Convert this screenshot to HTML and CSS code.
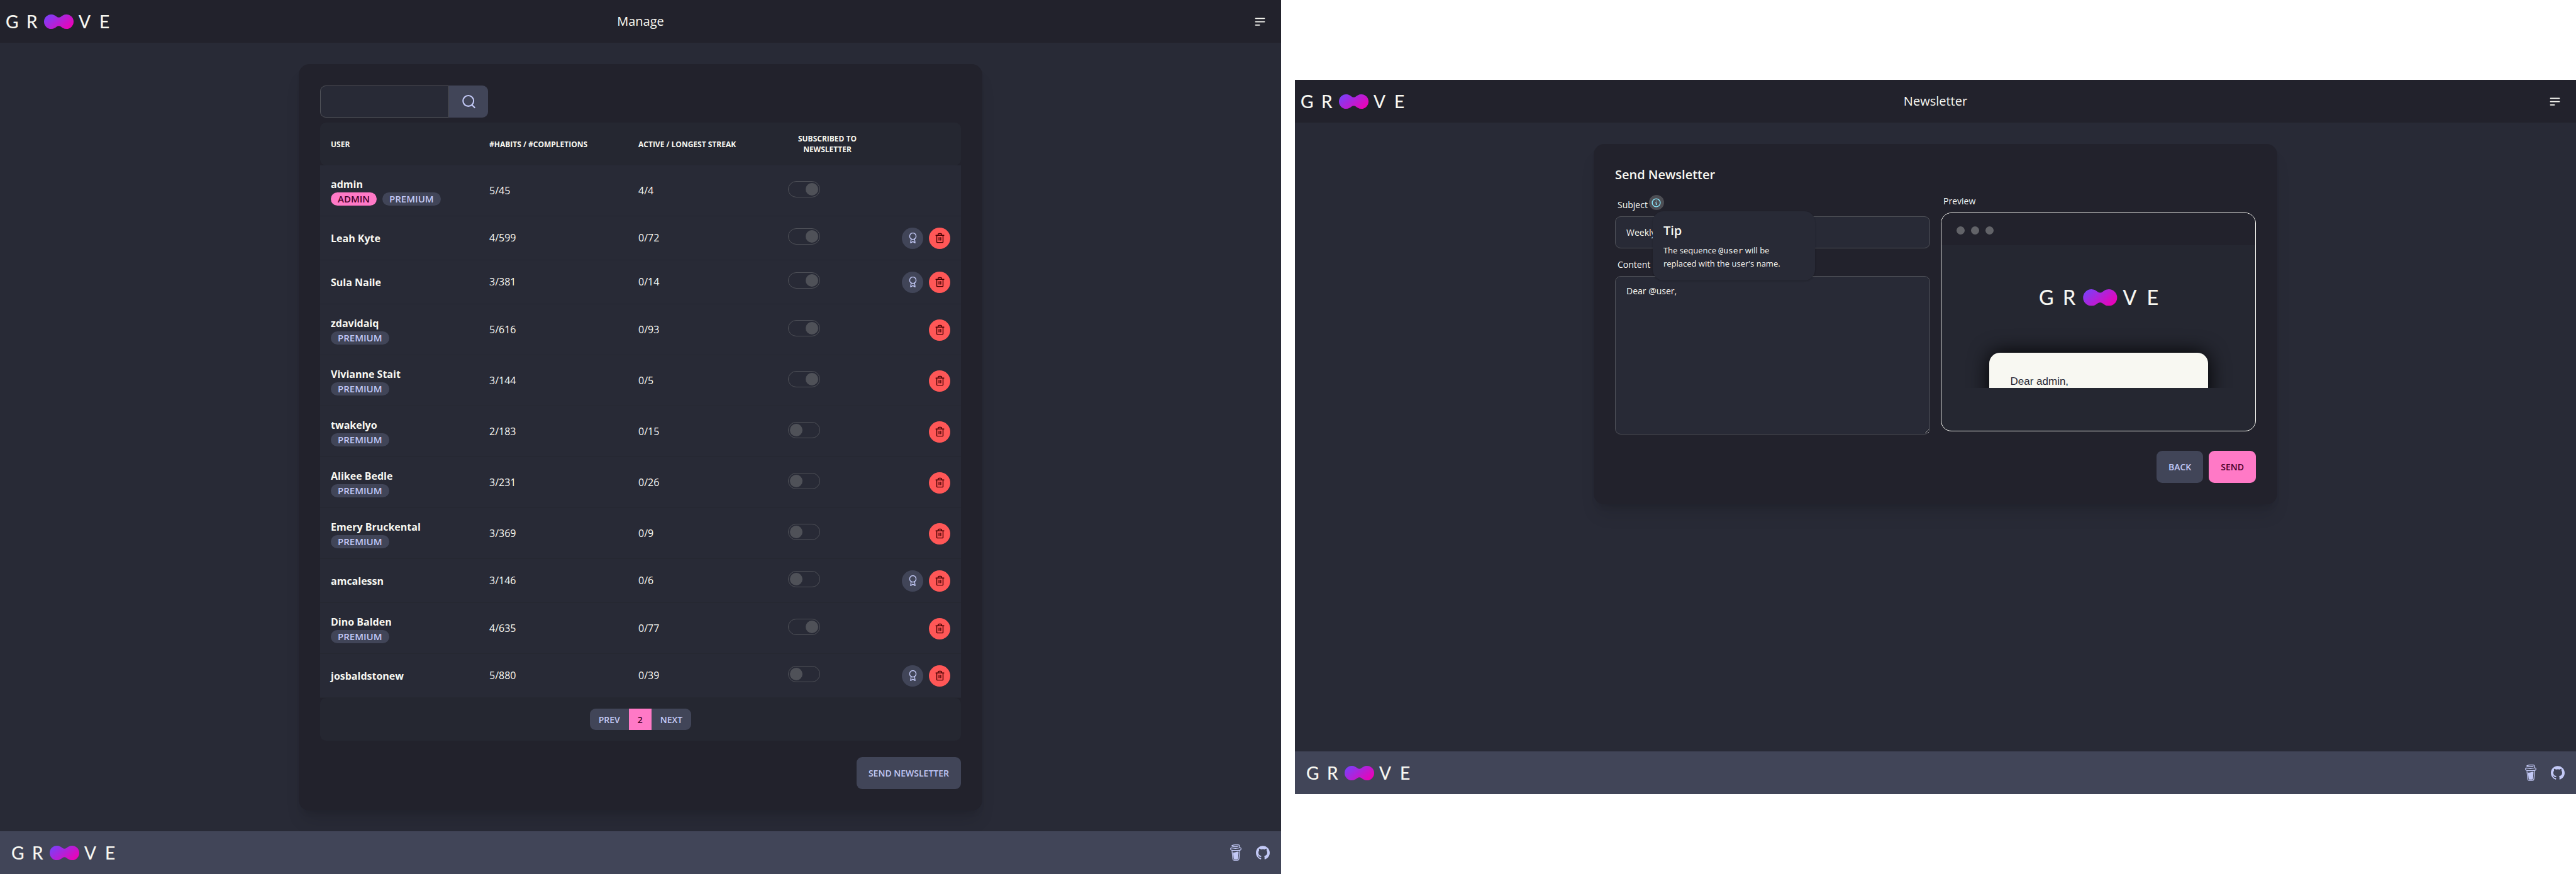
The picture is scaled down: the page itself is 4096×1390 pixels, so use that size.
FILE: index.html
```html
<!DOCTYPE html>
<html lang="en">
<head>
<meta charset="utf-8">
<title>Groove</title>
<meta name="viewport" content="width=device-width, initial-scale=1">
<link rel="stylesheet" href="styles.css">
</head>
<body>
<svg class="sprite" aria-hidden="true">
  <defs>
    <linearGradient id="blob-fill" x1="0" y1="0.2" x2="1" y2="0.8">
      <stop offset="0" stop-color="#7b3ff8"/>
      <stop offset="1" stop-color="#ef00b4"/>
    </linearGradient>
  </defs>
  <symbol id="blob" viewBox="0 0 165 23">
    <path fill="url(#blob-fill)" d="M72.500 0C76.500 0 79 2 81 3.500Q84.500 6.200 88 3.500C90 2 92.500 0 96.500 0A11.500 11.500 0 0 1 96.500 23C92.500 23 90 21 88 19.500Q84.500 16.800 81 19.500C79 21 76.500 23 72.500 23A11.500 11.500 0 0 1 72.500 0Z"/>
  </symbol>
  <symbol id="menu" viewBox="0 0 24 24"><path d="M4 6h16M4 12h16M4 18h7"/></symbol>
  <symbol id="search" viewBox="0 0 24 24"><circle cx="11.200" cy="11" r="8.100"/><path d="M16.800 17.200l4 4"/></symbol>
  <symbol id="award" viewBox="0 0 24 24"><circle cx="12" cy="8" r="7.200"/><path d="M8.210 13.890L7 23l5-3 5 3-1.210-9.120"/></symbol>
  <symbol id="trash" viewBox="0 0 24 24"><path d="M3 6h18M19 6v15a1 1 0 0 1-1 1H6a1 1 0 0 1-1-1V6M8 6V4a2 2 0 0 1 2-2h4a2 2 0 0 1 2 2v2M10 11v6M14 11v6"/></symbol>
  <symbol id="info" viewBox="0 0 24 24"><circle cx="12" cy="12" r="9"/><path d="M13 16h-1v-4h-1M12 8h.01"/></symbol>
  <symbol id="cup" viewBox="0 0 100 144">
    <path fill="none" stroke="currentColor" stroke-width="7" stroke-linecap="round" stroke-linejoin="round" d="M72 14C70 20 20 20 15 13C12 4 74 0 80 6C84 10 84 20 86 28M10 30C30 35 66 35 90 29Q98 31 96 42Q94 50 86 50C60 54 36 54 12 50Q4 48 4 40Q4 32 10 30ZM17 60L24 128Q26 139 36 140L64 140Q76 139 78 128L86 54"/>
    <path fill="currentColor" d="M26 70Q40 72 50 68Q60 62 75 64L71 120Q70 130 62 132L38 132Q32 130 31 122Z"/>
  </symbol>
  <symbol id="github" viewBox="0 0 24 24"><path fill="currentColor" d="M12 .297c-6.630 0-12 5.373-12 12 0 5.303 3.438 9.800 8.205 11.385.600.113.820-.258.820-.577 0-.285-.010-1.040-.015-2.040-3.338.724-4.042-1.610-4.042-1.610C4.422 18.070 3.633 17.700 3.633 17.700c-1.087-.744.084-.729.084-.729 1.205.084 1.838 1.236 1.838 1.236 1.070 1.835 2.809 1.305 3.495.998.108-.776.417-1.305.760-1.605-2.665-.300-5.466-1.332-5.466-5.930 0-1.310.465-2.380 1.235-3.220-.135-.303-.540-1.523.105-3.176 0 0 1.005-.322 3.300 1.230.960-.267 1.980-.399 3-.405 1.020.006 2.040.138 3 .405 2.280-1.552 3.285-1.230 3.285-1.230.645 1.653.240 2.873.120 3.176.765.840 1.230 1.910 1.230 3.220 0 4.610-2.805 5.625-5.475 5.920.420.360.810 1.096.810 2.220 0 1.606-.015 2.896-.015 3.286 0 .315.210.690.825.570C20.565 22.092 24 17.592 24 12.297c0-6.627-5.373-12-12-12"/></symbol>
</svg>

<div class="stage">
  <section class="pane">
    <header class="navbar">
      <a class="logo" href="#" aria-label="Groove">
        <svg class="wordmark" viewBox="0 0 165 23"><use href="#blob"/><text y="21.500"><tspan x="0">G</tspan><tspan x="33">R</tspan><tspan x="116">V</tspan><tspan x="149">E</tspan></text></svg>
      </a>
      <h1 class="navbar-title">Manage</h1>
      <button class="menu-btn" type="button" aria-label="Menu"><svg class="icon icon-menu"><use href="#menu"/></svg></button>
    </header>

    <main class="content">
      <div class="card">
        <form class="search">
          <input class="search-input" type="search" aria-label="Search users">
          <button class="search-btn" type="button" aria-label="Search"><svg class="icon icon-search"><use href="#search"/></svg></button>
        </form>

        <table class="users">
          <colgroup><col class="col-user"><col class="col-habits"><col class="col-streak"><col class="col-news"><col></colgroup>
          <thead>
            <tr><th>User</th><th>#Habits / #Completions</th><th>Active / Longest streak</th><th class="center">Subscribed to newsletter</th><th aria-label="Actions"></th></tr>
          </thead>
          <tbody>
            <tr><td><div class="name">admin</div><div class="badges"><span class="badge badge-primary">ADMIN</span><span class="badge">PREMIUM</span></div></td><td>5/45</td><td>4/4</td><td><input class="toggle" type="checkbox" aria-label="admin subscribed" checked disabled></td><td></td></tr>
            <tr><td><div class="name">Leah Kyte</div></td><td>4/599</td><td>0/72</td><td><input class="toggle" type="checkbox" aria-label="Leah Kyte subscribed" checked disabled></td><td><div class="actions"><button class="round" type="button" aria-label="Give premium"><svg class="icon icon-sm"><use href="#award"/></svg></button><button class="round round-error" type="button" aria-label="Delete"><svg class="icon icon-sm"><use href="#trash"/></svg></button></div></td></tr>
            <tr><td><div class="name">Sula Naile</div></td><td>3/381</td><td>0/14</td><td><input class="toggle" type="checkbox" aria-label="Sula Naile subscribed" checked disabled></td><td><div class="actions"><button class="round" type="button" aria-label="Give premium"><svg class="icon icon-sm"><use href="#award"/></svg></button><button class="round round-error" type="button" aria-label="Delete"><svg class="icon icon-sm"><use href="#trash"/></svg></button></div></td></tr>
            <tr><td><div class="name">zdavidaiq</div><div class="badges"><span class="badge">PREMIUM</span></div></td><td>5/616</td><td>0/93</td><td><input class="toggle" type="checkbox" aria-label="zdavidaiq subscribed" checked disabled></td><td><div class="actions"><button class="round round-error" type="button" aria-label="Delete"><svg class="icon icon-sm"><use href="#trash"/></svg></button></div></td></tr>
            <tr><td><div class="name">Vivianne Stait</div><div class="badges"><span class="badge">PREMIUM</span></div></td><td>3/144</td><td>0/5</td><td><input class="toggle" type="checkbox" aria-label="Vivianne Stait subscribed" checked disabled></td><td><div class="actions"><button class="round round-error" type="button" aria-label="Delete"><svg class="icon icon-sm"><use href="#trash"/></svg></button></div></td></tr>
            <tr><td><div class="name">twakelyo</div><div class="badges"><span class="badge">PREMIUM</span></div></td><td>2/183</td><td>0/15</td><td><input class="toggle" type="checkbox" aria-label="twakelyo subscribed" disabled></td><td><div class="actions"><button class="round round-error" type="button" aria-label="Delete"><svg class="icon icon-sm"><use href="#trash"/></svg></button></div></td></tr>
            <tr><td><div class="name">Alikee Bedle</div><div class="badges"><span class="badge">PREMIUM</span></div></td><td>3/231</td><td>0/26</td><td><input class="toggle" type="checkbox" aria-label="Alikee Bedle subscribed" disabled></td><td><div class="actions"><button class="round round-error" type="button" aria-label="Delete"><svg class="icon icon-sm"><use href="#trash"/></svg></button></div></td></tr>
            <tr><td><div class="name">Emery Bruckental</div><div class="badges"><span class="badge">PREMIUM</span></div></td><td>3/369</td><td>0/9</td><td><input class="toggle" type="checkbox" aria-label="Emery Bruckental subscribed" disabled></td><td><div class="actions"><button class="round round-error" type="button" aria-label="Delete"><svg class="icon icon-sm"><use href="#trash"/></svg></button></div></td></tr>
            <tr><td><div class="name">amcalessn</div></td><td>3/146</td><td>0/6</td><td><input class="toggle" type="checkbox" aria-label="amcalessn subscribed" disabled></td><td><div class="actions"><button class="round" type="button" aria-label="Give premium"><svg class="icon icon-sm"><use href="#award"/></svg></button><button class="round round-error" type="button" aria-label="Delete"><svg class="icon icon-sm"><use href="#trash"/></svg></button></div></td></tr>
            <tr><td><div class="name">Dino Balden</div><div class="badges"><span class="badge">PREMIUM</span></div></td><td>4/635</td><td>0/77</td><td><input class="toggle" type="checkbox" aria-label="Dino Balden subscribed" checked disabled></td><td><div class="actions"><button class="round round-error" type="button" aria-label="Delete"><svg class="icon icon-sm"><use href="#trash"/></svg></button></div></td></tr>
            <tr><td><div class="name">josbaldstonew</div></td><td>5/880</td><td>0/39</td><td><input class="toggle" type="checkbox" aria-label="josbaldstonew subscribed" disabled></td><td><div class="actions"><button class="round" type="button" aria-label="Give premium"><svg class="icon icon-sm"><use href="#award"/></svg></button><button class="round round-error" type="button" aria-label="Delete"><svg class="icon icon-sm"><use href="#trash"/></svg></button></div></td></tr>
          </tbody>
        </table>
        <nav class="pager" aria-label="Pages">
          <div class="pager-group"><button class="page" type="button">PREV</button><button class="page page-current" type="button">2</button><button class="page" type="button">NEXT</button></div>
        </nav>
        <div class="card-actions"><button class="btn" type="button">SEND NEWSLETTER</button></div>
      </div>
    </main>

    <footer class="footer">
      <a class="logo" href="#" aria-label="Groove">
        <svg class="wordmark" viewBox="0 0 165 23"><use href="#blob"/><text y="21.500"><tspan x="0">G</tspan><tspan x="33">R</tspan><tspan x="116">V</tspan><tspan x="149">E</tspan></text></svg>
      </a>
      <div class="links"><a href="#" aria-label="Buy me a coffee"><svg class="icon-cup"><use href="#cup"/></svg></a><a href="#" aria-label="GitHub"><svg class="icon-github"><use href="#github"/></svg></a></div>
    </footer>
  </section>

  <section class="pane pane-inset">
    <header class="navbar">
      <a class="logo" href="#" aria-label="Groove">
        <svg class="wordmark" viewBox="0 0 165 23"><use href="#blob"/><text y="21.500"><tspan x="0">G</tspan><tspan x="33">R</tspan><tspan x="116">V</tspan><tspan x="149">E</tspan></text></svg>
      </a>
      <h1 class="navbar-title">Newsletter</h1>
      <button class="menu-btn" type="button" aria-label="Menu"><svg class="icon icon-menu"><use href="#menu"/></svg></button>
    </header>

    <main class="content">
      <form class="card">
        <h2 class="card-title">Send Newsletter</h2>
        <div class="columns">
          <div class="fields">
            <div class="label label-field">
              <label for="subject">Subject</label>
              <div class="dropdown">
                <button class="info-btn" type="button" aria-label="Tip"><svg class="icon icon-info"><use href="#info"/></svg></button>
                <div class="tip">
                  <h3 class="tip-title">Tip</h3>
                  <p class="tip-text">The sequence <code>@user</code> will be replaced with the user's name.</p>
                </div>
              </div>
            </div>
            <input class="input" id="subject" type="text" value="Weekly">
            <div class="label label-field"><label for="body">Content</label></div>
            <textarea class="input textarea" id="body">Dear @user,</textarea>
          </div>
          <div class="preview">
            <div class="label">Preview</div>
            <div class="window">
              <div class="window-bar"><span class="dot"></span><span class="dot"></span><span class="dot"></span></div>
              <div class="mail">
                <svg class="wordmark wordmark-lg" viewBox="0 0 165 23"><use href="#blob"/><text y="21.500"><tspan x="0">G</tspan><tspan x="33">R</tspan><tspan x="116">V</tspan><tspan x="149">E</tspan></text></svg>
                <div class="letter">Dear admin,</div>
              </div>
            </div>
          </div>
        </div>
        <div class="card-actions"><button class="btn" type="button">BACK</button><button class="btn btn-primary" type="button">SEND</button></div>
      </form>
    </main>

    <footer class="footer">
      <a class="logo" href="#" aria-label="Groove">
        <svg class="wordmark" viewBox="0 0 165 23"><use href="#blob"/><text y="21.500"><tspan x="0">G</tspan><tspan x="33">R</tspan><tspan x="116">V</tspan><tspan x="149">E</tspan></text></svg>
      </a>
      <div class="links"><a href="#" aria-label="Buy me a coffee"><svg class="icon-cup"><use href="#cup"/></svg></a><a href="#" aria-label="GitHub"><svg class="icon-github"><use href="#github"/></svg></a></div>
    </footer>
  </section>
</div>
</body>
</html>
```

FILE: styles.css
```css
:root {
  --base: #282a36;
  --base-dark: #22222c;
  --base-mid: #252731;
  --neutral: #414558;
  --neutral-text: #c3c9f6;
  --text: #f8f8f2;
  --primary: #ff79c6;
  --primary-text: #470029;
  --error: #ff5757;
  --error-text: #470000;
  --line: #4f5158;
}

* { box-sizing: border-box; }

body {
  margin: 0;
  background: #fff;
  color: var(--text);
  font: 14px/21px "Open Sans", "Noto Sans", sans-serif;
}

button, input, textarea { font: inherit; color: inherit; }
button { border: 0; padding: 0; cursor: pointer; }
h1, h2, h3, p { margin: 0; }
svg { display: block; }

.sprite { position: absolute; width: 0; height: 0; }

.stage {
  display: grid;
  grid-template-columns: 1fr 1fr;
  column-gap: 22px;
  min-height: 100vh;
}

.pane { display: flex; flex-direction: column; background: var(--base); }
.pane-inset { margin-block: 127px; }

.navbar {
  display: grid;
  grid-template-columns: 1fr auto 1fr;
  align-items: center;
  height: 68px;
  padding: 0 9px;
  background: var(--base-dark);
}
.navbar-title { font-size: 20px; line-height: 30px; font-weight: 400; }
.menu-btn { justify-self: end; margin-right: 14px; background: none; }

.wordmark { width: 165px; height: 23px; overflow: visible; }
.wordmark text {
  fill: var(--text);
  stroke: var(--text);
  stroke-width: 0.2px;
  font-family: Lato, sans-serif;
  font-size: 28px;
}
.wordmark-lg { width: 190px; height: 27px; }

.icon {
  fill: none;
  stroke: currentColor;
  stroke-width: 2;
  stroke-linecap: round;
  stroke-linejoin: round;
}
.icon-menu { width: 21px; height: 21px; }
.icon-search { width: 25px; height: 25px; }
.icon-sm { width: 17px; height: 17px; }
.icon-info { width: 17px; height: 17px; color: #8be9fd; }
.icon-cup { width: 18px; height: 26px; }
.icon-github { width: 22px; height: 22px; }

.content { flex: 1; padding: 34px 34px 33px; }

.card {
  max-width: 1087px;
  margin: 0 auto;
  padding: 34px;
  border-radius: 17px;
  background: var(--base-dark);
  box-shadow: 0 21px 27px -5px rgba(0, 0, 0, 0.1), 0 8px 11px -6px rgba(0, 0, 0, 0.1);
}
.card-title { font-size: 20px; line-height: 29px; font-weight: 600; }
.card-actions { display: flex; justify-content: flex-end; gap: 9px; margin-top: 26px; }

.btn {
  height: 51px;
  padding: 0 19px;
  border-radius: 9px;
  background: var(--neutral);
  color: var(--neutral-text);
  font-weight: 600;
}
.btn-primary { background: var(--primary); color: var(--primary-text); }

.search { display: flex; margin-bottom: 8px; }
.search-input {
  width: 205px;
  height: 51px;
  padding: 0 17px;
  border: 1px solid var(--line);
  border-radius: 9px 0 0 9px;
  background: var(--base);
}
.search-btn {
  display: grid;
  place-items: center;
  width: 62px;
  border-radius: 0 9px 9px 0;
  background: var(--neutral);
  color: var(--neutral-text);
}

.users { width: 100%; table-layout: fixed; border-collapse: separate; border-spacing: 0; }
.col-user { width: 252px; }
.col-habits { width: 237px; }
.col-streak { width: 238px; }
.col-news { width: 159px; }
.users th {
  height: 68px;
  padding: 17px;
  background: var(--base-mid);
  font-size: 12px;
  line-height: 17px;
  font-weight: 700;
  text-align: left;
  text-transform: uppercase;
}
.users .center { text-align: center; }
.users th:first-child { border-radius: 9px 0 0 9px; }
.users th:last-child { border-radius: 0 9px 9px 0; }
.users td {
  height: 70px;
  padding: 17px;
  border-bottom: 1px solid var(--base-mid);
  background: var(--base);
  font-size: 16px;
}
.users tr:has(.badges) td { height: 81px; padding-bottom: 16px; }

.name { line-height: 26px; font-weight: 700; }
.badges { display: flex; gap: 9px; }
.badge {
  height: 21px;
  padding: 0 11px;
  border-radius: 11px;
  background: var(--neutral);
  color: var(--neutral-text);
  font-size: 15px;
  line-height: 21px;
  font-weight: 600;
}
.badge-primary { background: var(--primary); color: var(--primary-text); }

.toggle {
  display: block;
  appearance: none;
  width: 51px;
  height: 26px;
  margin: 0 0 6px;
  padding: 2px;
  border: 1px solid var(--line);
  border-radius: 13px;
}
.toggle::before {
  content: "";
  display: block;
  width: 20px;
  height: 20px;
  border-radius: 50%;
  background: var(--line);
}
.toggle:checked::before { margin-left: auto; }

.actions { display: flex; justify-content: flex-end; gap: 9px; }
.round {
  display: grid;
  place-items: center;
  width: 34px;
  height: 34px;
  border-radius: 50%;
  background: var(--neutral);
  color: var(--neutral-text);
}
.round-error { background: var(--error); color: var(--error-text); }

.pager {
  display: flex;
  justify-content: center;
  padding: 17px;
  border-radius: 9px;
  background: var(--base-mid);
}
.pager-group { display: flex; overflow: hidden; border-radius: 9px; }
.page {
  height: 34px;
  padding: 0 14px;
  background: var(--neutral);
  color: var(--neutral-text);
  font-weight: 600;
}
.page-current { background: var(--primary); color: var(--primary-text); }

.columns { display: grid; grid-template-columns: 1fr 1fr; gap: 17px; margin-top: 8px; }
.fields { display: flex; flex-direction: column; }
.label { display: flex; align-items: center; height: 38px; padding: 0 4px; }
.label-field { margin-top: 6px; }
.input {
  width: 100%;
  height: 51px;
  padding: 0 17px;
  border: 1px solid var(--line);
  border-radius: 9px;
  background: var(--base);
}
.textarea { display: block; height: 252px; padding: 8px 17px; line-height: 30px; }

.dropdown { position: relative; margin: 0 0 6px 2px; }
.info-btn {
  display: grid;
  place-items: center;
  width: 24px;
  height: 24px;
  border-radius: 50%;
  background: #4d4e54;
}
.tip {
  position: absolute;
  z-index: 1;
  top: 100%;
  left: 6px;
  width: 258px;
  margin-top: 2px;
  padding: 16px 17px;
  border-radius: 17px;
  background: var(--base);
  box-shadow: 0 1px 3px rgba(0, 0, 0, 0.1), 0 1px 2px rgba(0, 0, 0, 0.1);
}
.tip-title { margin-bottom: 7px; font-size: 20px; line-height: 29px; font-weight: 600; }
.tip-text { font-size: 13px; }
.tip-text code { font: 13px/21px "DejaVu Sans Mono", monospace; }

.window {
  overflow: hidden;
  height: 348px;
  border: 1px solid var(--text);
  border-radius: 17px;
  background: var(--base-mid);
}
.window-bar { display: flex; align-items: center; gap: 10px; height: 51px; padding: 4px 24px 0; background: var(--base-dark); }
.dot { width: 13px; height: 13px; border-radius: 50%; background: #626368; }
.mail { display: flex; flex-direction: column; align-items: center; overflow: hidden; height: 227px; padding-top: 70px; }
.letter {
  flex: none;
  width: 348px;
  margin-top: 75px;
  padding: 34px;
  border-radius: 17px;
  background: #f8f8f2;
  color: #282a36;
  font: 17px/24px "Liberation Sans", Arial, sans-serif;
  box-shadow: 0 0 32px #000;
}

.footer {
  display: flex;
  align-items: center;
  justify-content: space-between;
  height: 68px;
  padding: 0 18px;
  background: var(--neutral);
}
.links { display: flex; align-items: center; gap: 23px; color: var(--neutral-text); }
.links a { color: inherit; }
```
